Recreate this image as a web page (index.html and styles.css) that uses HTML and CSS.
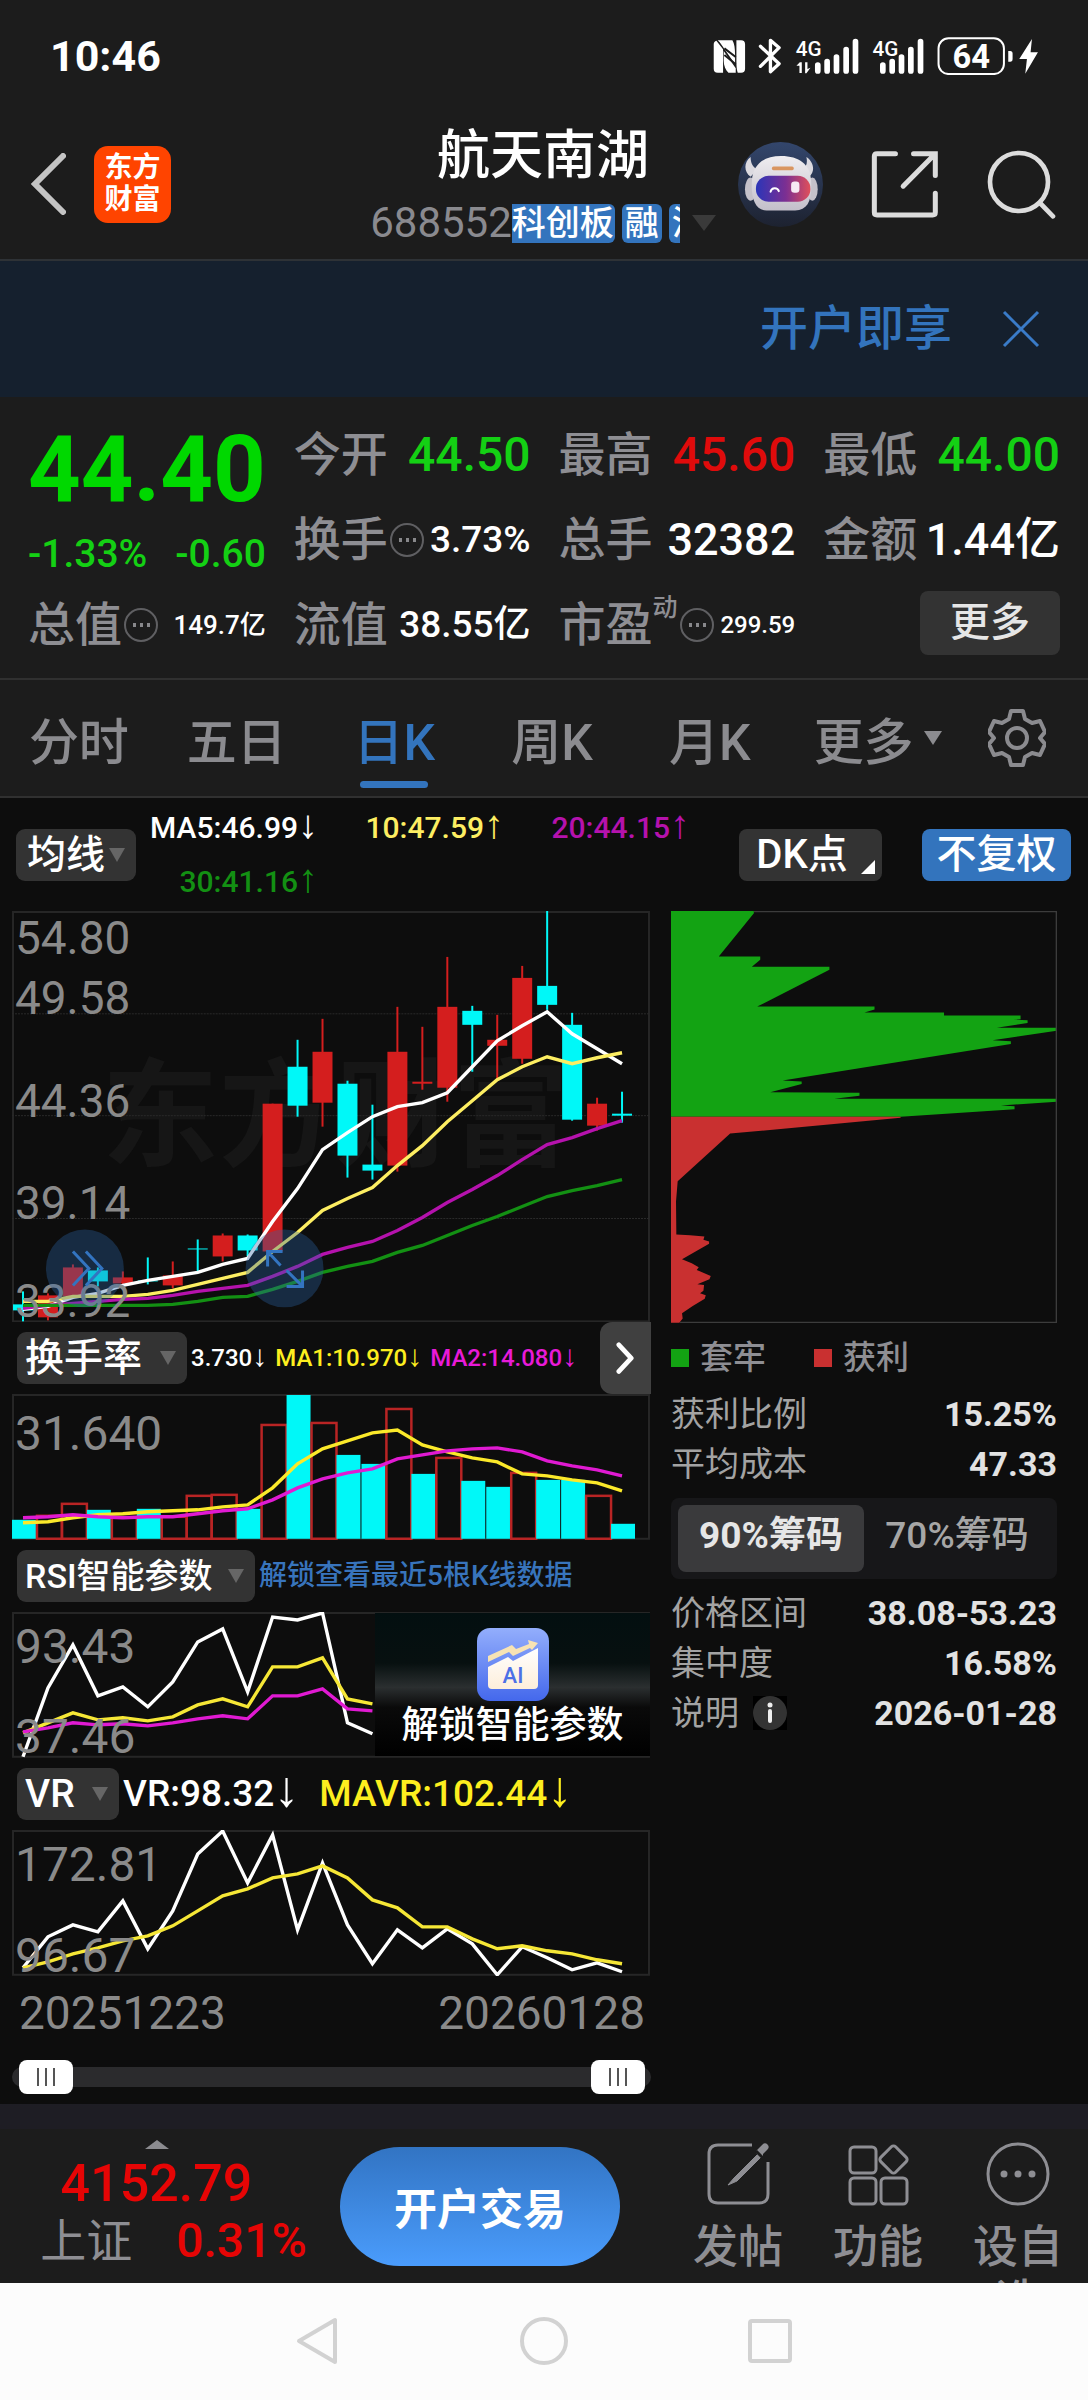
FILE: index.html
```html
<!DOCTYPE html>
<html lang="zh-CN">
<head>
  <meta charset="UTF-8">
  <meta name="viewport" content="width=device-width, initial-scale=1.0">
  <title>航天南湖 688552</title>
  <link rel="stylesheet" href="styles.css">
</head>
<body>
  <div class="status">
    <span class="clock">10:46</span>
    <svg class="status-icons" viewBox="38 50 980 115" fill="#fff">
      <path d="M52 60h44c6 10 8 24 8 44v28L58 66zM40 72c0-6 3-10 8-11l20 26v70H52c-8 0-12-4-12-12zM110 60h12c8 0 12 4 12 12v73c0 8-4 12-12 12h-10c-4-12-4-24-4-44V60zM70 92l36 52v13H84c-8-8-14-20-14-36z"/>
      <path d="M72 84l34 26M72 104l34 28" stroke="#1c1c1c" stroke-width="6"/>
      <path d="M180 78l56 52-26 24V60l26 22-56 56" fill="none" stroke="#fff" stroke-width="10" stroke-linejoin="round" stroke-linecap="round"/>
      <text x="286" y="106" font-size="62">4G</text>
      <path d="M288 136l10-10h6v32h-7v-22zM314 126h7v20l9-4-12 17h-4z"/>
      <path d="M352 134v18M380 124v28M408 110v42M437 88v64M465 64v88" stroke="#fff" stroke-width="17" stroke-linecap="round"/>
      <text x="516" y="106" font-size="62">4G</text>
      <path d="M547 134v18M575 124v28M603 110v42M631 88v64M660 64v88" stroke="#fff" stroke-width="17" stroke-linecap="round"/>
      <rect x="714" y="54" width="196" height="107" rx="30" fill="none" stroke="#fff" stroke-width="6"/>
      <text class="battery" x="812" y="142" font-size="98" text-anchor="middle">64</text>
      <path d="M923 92h6q7 0 7 8v16q0 8-7 8h-6z"/>
      <path d="M994 56l-38 60h23l-5 44 38-64h-22z"/>
    </svg>
  </div>

  <header class="topbar">
    <div class="topbar-left">
      <button class="icon-btn" aria-label="返回">
        <svg class="back" viewBox="0 0 36 62"><path d="M33 3L5 31l28 28" fill="none" stroke="#c4c4c4" stroke-width="6" stroke-linecap="round"/></svg>
      </button>
      <div class="logo">东方<br>财富</div>
    </div>
    <div class="stock">
      <h1>航天南湖</h1>
      <div class="stock-sub">
        <span class="code">688552</span>
        <div class="tags"><span class="tag first">科创板</span><span class="tag">融</span><span class="tag">沪</span></div>
        <span class="caret dark"></span>
      </div>
    </div>
    <div class="topbar-right">
      <button class="icon-btn" aria-label="智能助手">
        <svg class="avatar" viewBox="114 366 256 256">
          <defs>
            <linearGradient id="sky" x1="0" y1="0" x2="0" y2="1"><stop offset="0" stop-color="#33466c"/><stop offset="1" stop-color="#1d2230"/></linearGradient>
            <linearGradient id="visor" x1="0" y1="0" x2="1" y2="0"><stop offset="0" stop-color="#2b35b8"/><stop offset=".55" stop-color="#7c2f92"/><stop offset="1" stop-color="#e0505a"/></linearGradient>
            <linearGradient id="shell" x1="0" y1="0" x2="0" y2="1"><stop offset="0" stop-color="#efedf0"/><stop offset="1" stop-color="#c3bfca"/></linearGradient>
          </defs>
          <circle cx="242" cy="494" r="128" fill="url(#sky)"/>
          <path d="M152 411c-20 14-22 44 0 60l20-22c-14-8-20-20-20-38zM320 411c22 14 28 44 8 60l-20-22c12-8 16-20 12-38z" fill="#dcdae0"/>
          <ellipse cx="152" cy="508" rx="17" ry="35" fill="#c4c1ca"/>
          <ellipse cx="338" cy="508" rx="16" ry="35" fill="#c4c1ca"/>
          <path d="M156 480c4-46 34-72 88-72s88 26 90 72c4 60-8 92-48 92h-86c-34 0-48-36-44-92z" fill="url(#shell)"/>
          <rect x="168" y="468" width="164" height="78" rx="38" fill="url(#visor)"/>
          <rect x="216" y="440" width="66" height="11" rx="5" fill="#d99560"/>
          <path d="M212 516c3-14 21-14 25-2" fill="none" stroke="#fff" stroke-width="6" stroke-linecap="round"/>
          <rect x="274" y="485" width="25" height="34" rx="10" fill="#f6e9f4"/>
        </svg>
      </button>
      <button class="icon-btn" aria-label="分享">
        <svg class="share" viewBox="507 391 203 203" fill="none" stroke="#dcdcdc" stroke-width="15" stroke-linecap="round"><path d="M580 402h-55q-8 0-8 8v167q0 8 8 8h166q8 0 8-8v-57M634 402h65v65M696 405l-93 94"/></svg>
      </button>
      <button class="icon-btn" aria-label="搜索">
        <svg class="search" viewBox="859 387 207 207" fill="none" stroke="#dcdcdc" stroke-width="14" stroke-linecap="round"><circle cx="955" cy="483" r="87"/><path d="M1018 546l39 40"/></svg>
      </button>
    </div>
  </header>

  <div class="banner">
    <a href="#">开户即享</a>
    <button class="icon-btn" aria-label="关闭">
      <svg class="close" viewBox="0 0 38 38"><path d="M2 2l34 34M36 2L2 36" stroke="#3a7bc8" stroke-width="3"/></svg>
    </button>
  </div>

  <section class="quote">
    <div class="price">
      <strong>44.40</strong>
      <div class="change"><span>-1.33%</span><span>-0.60</span></div>
    </div>
    <div class="item"><span class="label">今开</span><span class="num n-xl green">44.50</span></div>
    <div class="item"><span class="label">最高</span><span class="num n-xl red">45.60</span></div>
    <div class="item"><span class="label">最低</span><span class="num n-xl green">44.00</span></div>
    <div class="item"><span class="label">换手<i class="dots"></i></span><span class="num n-m">3.73%</span></div>
    <div class="item"><span class="label">总手</span><span class="num n-l">32382</span></div>
    <div class="item"><span class="label">金额</span><span class="num n-l">1.44亿</span></div>
    <div class="item"><span class="label">总值<i class="dots"></i></span><span class="num n-s">149.7亿</span></div>
    <div class="item"><span class="label">流值</span><span class="num n-m">38.55亿</span></div>
    <div class="item"><span class="label">市盈<sup>动</sup><i class="dots"></i></span><span class="num n-xs">299.59</span></div>
    <div class="item end"><button class="more">更多</button></div>
  </section>

  <nav class="tabs">
    <button>分时</button>
    <button>五日</button>
    <button class="active">日K</button>
    <button>周K</button>
    <button>月K</button>
    <button class="has-caret">更多<span class="caret small"></span></button>
    <button class="gear" aria-label="设置">
      <svg viewBox="0 0 58 58" fill="none" stroke="#8b8b8f" stroke-width="4" stroke-linejoin="round"><path d="M23 2h12l2 8 7 4 8-2 5 11-5 6 5 6-5 11-8-2-7 4-2 8H23l-2-8-7-4-8 2-5-11 5-6-5-6 5-11 8 2 7-4z"/><circle cx="29" cy="29" r="10"/></svg>
    </button>
  </nav>

  <main class="panel">
    <div class="ma-bar">
      <span class="picker tight"><select aria-label="均线"><option>均线</option></select></span>
      <div class="ma-list">
        <span class="white">MA5:46.99<i class="arrow">↓</i></span>
        <span class="yellow">10:47.59<i class="arrow">↑</i></span>
        <span class="purple">20:44.15<i class="arrow">↑</i></span>
        <span class="darkgreen">30:41.16<i class="arrow">↑</i></span>
      </div>
      <button class="chip dk">DK点</button>
      <button class="chip blue">不复权</button>
    </div>

    <div class="columns">
      <div class="charts">
        <svg class="chart" id="kline" viewBox="0 0 640 412"></svg>

        <div class="ind-bar">
          <span class="picker"><select aria-label="指标一"><option>换手率</option></select></span>
          <div class="values small"><span>3.730<i class="arrow">↓</i></span><span class="lemon">MA1:10.970<i class="arrow">↓</i></span><span class="pink">MA2:14.080<i class="arrow">↓</i></span></div>
          <button class="expand" aria-label="展开"><svg viewBox="0 0 20 34"><path d="M3 3l13 14L3 31" fill="none" stroke="#fff" stroke-width="5" stroke-linecap="round" stroke-linejoin="round"/></svg></button>
        </div>
        <svg class="chart sub" id="turnover" viewBox="0 0 640 146"></svg>

        <div class="ind-bar">
          <span class="picker rsi"><select aria-label="指标二"><option>RSI智能参数</option></select></span>
          <a class="unlock-link" href="#">解锁查看最近5根K线数据</a>
        </div>
        <div class="chart-box">
          <svg class="chart sub" id="rsi" viewBox="0 0 640 146"></svg>
          <button class="unlock">
            <svg viewBox="0 0 72 73">
              <defs>
                <linearGradient id="aibg" x1="0" y1="0" x2="0" y2="1"><stop offset="0" stop-color="#93aefc"/><stop offset="1" stop-color="#4468ec"/></linearGradient>
                <linearGradient id="paper" x1="0" y1="0" x2="0" y2="1"><stop offset="0" stop-color="#fff"/><stop offset="1" stop-color="#fdeeda"/></linearGradient>
              </defs>
              <rect width="72" height="73" rx="13" fill="url(#aibg)"/>
              <path d="M11 39l20-10 5 4 25-13v37q0 4-4 4H15q-4 0-4-4z" fill="url(#paper)"/>
              <path d="M11 28l24-11 4 4 13-5-1-4 10 3-6 7-2-2-17 8-4-4-21 10z" fill="#f7e3b4"/>
              <text x="36" y="55" font-size="22" text-anchor="middle" fill="#4d70e6">AI</text>
            </svg>
            <span>解锁智能参数</span>
          </button>
        </div>

        <div class="ind-bar">
          <span class="picker"><select aria-label="指标三"><option>VR</option></select></span>
          <div class="values"><span>VR:98.32<i class="arrow">↓</i></span><span class="lemon">MAVR:102.44<i class="arrow">↓</i></span></div>
        </div>
        <svg class="chart sub" id="vr" viewBox="0 0 640 146"></svg>

        <div class="dates"><span>20251223</span><span>20260128</span></div>
        <div class="range">
          <input type="range" min="0" max="100" value="0" aria-label="开始日期">
          <input type="range" min="0" max="100" value="100" aria-label="结束日期">
        </div>
      </div>

      <aside class="chips">
        <svg class="chart" viewBox="33 36 1155 1233">
          <path fill="#13a313" d="M33 36H281V43L176 172H300V182L275 203H507V212L291 322H642V331L612 340H850V349H1079V360L1057 361 1100 363V371L1008 385H1187V394L995 423 1050 426V434L367 543 424 546V554L330 578 597 580V589L522 598H1187V607L1020 618 1061 620V629L720 652H33z"/>
          <path fill="#c93030" d="M33 652H720V655L210 702 53 845 48 905 49 1004 90 1006 133 1010 130 1020 147 1025V1032L66 1078 95 1090 116 1102 110 1110 152 1128 148 1138 112 1153 132 1155 130 1172 120 1180 137 1186 134 1196 98 1218 66 1240 68 1255 58 1268H33z"/>
          <path fill="none" stroke="#3c3c3c" stroke-width="4" d="M281 38H1186V1267H60"/>
        </svg>
        <div class="legend">
          <span class="key"><i class="sq g"></i>套牢</span>
          <span class="key"><i class="sq r"></i>获利</span>
        </div>
        <dl>
          <div><dt>获利比例</dt><dd>15.25%</dd></div>
          <div><dt>平均成本</dt><dd>47.33</dd></div>
        </dl>
        <div class="segment">
          <button class="on">90%筹码</button>
          <button>70%筹码</button>
        </div>
        <dl>
          <div><dt>价格区间</dt><dd>38.08-53.23</dd></div>
          <div><dt>集中度</dt><dd>16.58%</dd></div>
          <div><dt>说明<svg class="info" viewBox="0 0 34 34"><path d="M0 0h34v34H0z"/><circle cx="17" cy="17" r="17" fill="#333"/><path d="M17 15v10" stroke="#eee" stroke-width="4" stroke-linecap="round"/><circle cx="17" cy="9" r="2.5" fill="#eee"/></svg></dt><dd>2026-01-28</dd></div>
        </dl>
      </aside>
    </div>
  </main>

  <footer class="toolbar">
    <div class="index">
      <i class="up"></i>
      <span class="index-num">4152.79</span>
      <div class="index-row"><span class="index-name">上证</span><span class="index-pct">0.31%</span></div>
    </div>
    <button class="cta">开户交易</button>
    <button class="tool">
      <svg viewBox="0 0 64 64" fill="none" stroke="#8e8e93" stroke-width="3"><path d="M46 3H12q-9 0-9 9v40q0 9 9 9h41q9 0 9-9V20"/><path d="M54 10L28 36l-6 7 9-4 26-26z" fill="#8e8e93" stroke-width="1"/><path d="M54 10l5-5" stroke-width="7" stroke-linecap="round"/><path d="M50 9l8 8" stroke="#1c1c1c" stroke-width="3"/></svg>
      <span>发帖</span>
    </button>
    <button class="tool">
      <svg viewBox="0 0 64 64" fill="none" stroke="#8e8e93" stroke-width="3"><rect x="4" y="5" width="26" height="26" rx="4"/><rect x="4" y="36" width="26" height="26" rx="4"/><rect x="35" y="36" width="26" height="26" rx="4"/><rect x="37" y="7" width="21" height="21" rx="3" transform="rotate(45 47.5 17.5)"/></svg>
      <span>功能</span>
    </button>
    <button class="tool">
      <svg viewBox="0 0 64 64"><circle cx="32" cy="32" r="30" fill="none" stroke="#8e8e93" stroke-width="3"/><g fill="#8e8e93"><circle cx="18" cy="32" r="3.5"/><circle cx="32" cy="32" r="3.5"/><circle cx="46" cy="32" r="3.5"/></g></svg>
      <span>设自选</span>
    </button>
  </footer>

  <div class="sysnav">
    <button class="icon-btn" aria-label="返回"><svg viewBox="0 0 48 48"><path d="M41 3v42L5 24z"/></svg></button>
    <button class="icon-btn" aria-label="主页"><svg viewBox="0 0 48 48"><circle cx="24" cy="24" r="22"/></svg></button>
    <button class="icon-btn" aria-label="最近任务"><svg viewBox="0 0 48 48"><rect x="4" y="4" width="40" height="40" rx="2"/></svg></button>
  </div>
  <script src="charts.js"></script>
</body>
</html>
```
FILE: styles.css
```css
* {margin:0; padding:0; box-sizing:border-box;}
body {background:#1c1c1c; color:#fff; font-family:Roboto, "Liberation Sans", "Noto Sans CJK SC", sans-serif; font-weight:500;}
button, select, input {font:inherit; color:inherit; background:none; border:0; cursor:pointer;}
a {text-decoration:none;}
i {font-style:normal;}
svg {display:block;}
svg text {font-family:Roboto, "Liberation Sans", "Noto Sans CJK SC", sans-serif;}
.icon-btn {display:flex;}

.green {color:#14d014;}
.red {color:#e00b0b;}
.yellow {color:#fdee62;}
.purple {color:#b512ad;}
.darkgreen {color:#139013;}
.lemon {color:#fdee1f;}
.pink {color:#e81ad8;}

.caret {width:0; height:0; border:12px solid transparent; border-top:16px solid #666; border-bottom:0;}
.caret.dark {border-top-color:#3a3a3a;}
.caret.small {border-width:14px 9px 0; border-top-color:#8b8b8f;}
.arrow {font-size:40px; line-height:30px;}

/* status bar */
.status {display:flex; justify-content:space-between; align-items:center; height:112px; padding:0 48px 0 50px;}
.clock {font-size:43px; line-height:44px; font-weight:700;}
.status-icons {width:327px;}
.battery {font-weight:700;}

/* top bar */
.topbar {display:grid; grid-template-columns:1fr auto 1fr; height:149px; padding:10px 32px 0 30px; border-bottom:2px solid #2e3236;}
.topbar-left {display:flex; align-items:center; gap:28px; height:124px;}
.back {width:36px;}
.logo {display:flex; align-items:center; justify-content:center; width:77px; height:77px; border-radius:14px; background:#ff4400; font-size:28px; line-height:32px; font-weight:700;}
.stock {display:flex; flex-direction:column; align-items:center;}
.stock h1 {font-size:53px; line-height:68px; font-weight:500;}
.stock-sub {display:flex; align-items:center; height:66px;}
.code {font-size:42px; line-height:42px; color:#8a8a8f; font-weight:400;}
.tags {display:flex; gap:7px; width:168px; overflow:hidden;}
.tag {flex:none; padding:0 3px; border-radius:6px; background:#3374bd; font-size:34px; line-height:39px;}
.tag.first {padding:0 1px 0 0; border-radius:0 6px 6px 0;}
.stock-sub .caret {margin-left:12px;}
.topbar-right {display:flex; align-items:center; justify-content:flex-end; gap:48px; height:124px;}
.avatar {width:85px;}
.share {width:68px;}
.search {width:69px;}

.banner {display:flex; align-items:center; justify-content:flex-end; gap:50px; height:136px; padding-right:48px; background:#15202e;}
.banner a {font-size:48px; line-height:56px; color:#3374bd;}
.close {width:38px;}

/* quote */
.quote {display:grid; grid-template-columns:repeat(4, 1fr); grid-auto-rows:85px; column-gap:28px; padding:15px 28px 11px; border-bottom:2px solid #303030;}
.price {grid-row:span 2; color:#00d800;}
.price strong {display:block; padding-top:12px; font-size:92px; line-height:92px; font-weight:700;}
.change {display:flex; justify-content:space-between; padding-top:16px; font-size:39px; line-height:44px; color:#14d014;}
.item {display:flex; align-items:center; justify-content:space-between; white-space:nowrap;}
.item.end {justify-content:flex-end;}
.label {display:flex; align-items:center; font-size:47px; line-height:60px; color:#8e8e93;}
.label sup {align-self:flex-start; font-size:25px; line-height:25px;}
.num {line-height:50px;}
.n-xl {font-size:48px;}
.n-l {font-size:45px;}
.n-m {font-size:37px;}
.n-s {font-size:26px;}
.n-xs {font-size:24px;}
.dots {display:flex; align-items:center; justify-content:center; width:34px; height:34px; margin-left:2px; border:2px solid #5f5f62; border-radius:50%;}
.dots:before {content:''; width:20px; height:4px; background:radial-gradient(circle, #88888b 2px, transparent 2px) 0 0 / 7px 4px;}
.more {width:140px; height:64px; margin-bottom:4px; border-radius:8px; background:#333; font-size:40px; line-height:60px; color:#e6e6e6;}

/* period tabs */
.tabs {display:flex; height:118px; border-bottom:2px solid #303030;}
.tabs button {position:relative; flex:0 0 14.5%; display:flex; align-items:center; justify-content:center; font-size:50px; color:#8b8b8f;}
.tabs .gear {flex:1;}
.gear svg {width:58px;}
.tabs .active {color:#3374bd;}
.tabs .active:after {content:''; position:absolute; bottom:8px; width:68px; height:7px; border-radius:4px; background:#3374bd;}
.tabs .has-caret {gap:10px; padding-left:20px;}

/* chart panel */
.panel {background:#0d0d0d;}
.ma-bar {display:flex; align-items:center; height:113px; padding:0 17px 0 16px;}
.picker {position:relative; display:flex; border-radius:9px; background:#333;}
.picker select {appearance:none; height:52px; padding:0 44px 0 8px; font-size:39px; line-height:52px;}
.picker.tight select {padding:0 30px 0 11px;}
.picker.rsi select {padding-right:42px; font-size:34px;}
.picker:after {content:''; position:absolute; right:11px; top:19px; border:8px solid transparent; border-top:14px solid #666; border-bottom:0; pointer-events:none;}
.ma-list {flex:none; display:grid; grid-template-columns:repeat(3, 186px); margin-right:auto; margin-left:-4px; font-size:30px; line-height:54px; text-align:right;}
.chip {position:relative; width:143px; height:52px; border-radius:8px; background:#333; font-size:40px; line-height:50px;}
.chip.dk {padding-right:17px;}
.chip.dk:after {content:''; position:absolute; right:7px; bottom:7px; border:7px solid #fff; border-top-color:transparent; border-left-color:transparent;}
.chip.blue {width:149px; margin-left:40px; background:#3374bd;}

.columns {display:flex; gap:20px; padding:0 31px 0 12px;}
.charts {flex:639;}
.chips {flex:386;}
.chart {width:100%;}
.charts .chart {font-size:46px;}
.charts .sub {font-size:48px;}
.ind-bar {display:flex; align-items:center; height:72px; padding-left:5px;}
.values {display:flex; gap:20px; padding-left:4px; font-size:37px; line-height:48px; white-space:nowrap;}
.values .arrow {font-size:50px;}
.values.small {gap:8px; font-size:24px;}
.values.small .arrow {font-size:30px;}
.expand {display:flex; align-items:center; justify-content:center; align-self:stretch; width:51px; margin-left:auto; border-radius:12px 0 0 12px; background:#404040;}
.expand svg {width:19px;}
.unlock-link {padding-left:4px; font-size:28px; line-height:48px; color:#3874bc; white-space:nowrap;}
.chart-box {position:relative;}
.unlock {position:absolute; top:1px; right:1px; bottom:2px; width:43%; display:flex; flex-direction:column; align-items:center; justify-content:center; gap:3px; padding-top:7px; background:linear-gradient(#030f10 0%, #071010 35%, #2b2f30 52%, #0a0a0a 66%, #000 100%); font-size:37px; line-height:44px;}
.unlock svg {width:72px;}
.dates {display:flex; justify-content:space-between; padding:0 6px 0 7px; font-size:46px; line-height:75px; color:#8a8a8a; font-weight:400;}
.range {position:relative; height:53px;}
.range:before {content:''; position:absolute; left:0; right:0; top:16px; height:20px; border-radius:10px; background:#2b2b2d;}
.range input {appearance:none; position:absolute; left:7px; top:9px; width:calc(100% - 13px); height:34px; pointer-events:none;}
.range input::-webkit-slider-thumb {appearance:none; width:54px; height:34px; border-radius:8px; background:linear-gradient(90deg, #555 2px, transparent 2px) 18px 8px / 8px 18px no-repeat, linear-gradient(90deg, #555 2px, transparent 2px) 26px 8px / 8px 18px no-repeat, linear-gradient(90deg, #555 2px, transparent 2px) 34px 8px / 8px 18px no-repeat, #fff; pointer-events:auto;}

.legend {display:flex; gap:48px; padding:10px 0 6px; font-size:33px; line-height:50px; color:#8e8e93;}
.key {display:flex; align-items:center; gap:11px;}
.sq {width:18px; height:18px;}
.sq.g {background:#13a313;}
.sq.r {background:#c93030;}
.chips dl div {display:flex; justify-content:space-between; font-size:34px; line-height:50px; white-space:nowrap;}
.chips dt {display:flex; align-items:center; gap:14px; color:#a3a3a3; font-weight:400;}
.chips dd {color:#e2e2e2; font-weight:700;}
.info {width:34px;}
.segment {display:flex; margin:9px 0; padding:7px; border-radius:8px; background:#171719;}
.segment button {flex:1; height:67px; border-radius:8px; font-size:37px; line-height:62px; padding-bottom:5px; color:#a6a6a6; white-space:nowrap;}
.segment .on {background:#3a3a3c; color:#e6e6e6; font-weight:700;}

/* bottom toolbar */
.toolbar {display:flex; height:179px; border-top:25px solid #1e1d24; overflow:hidden;}
.index {flex:1; display:flex; flex-direction:column; align-items:center; padding:11px 27px 0 0;}
.up {border:12px solid transparent; border-bottom:9px solid #8b8b8f; border-top:0;}
.index-num {padding-top:8px; font-size:52px; line-height:54px; color:#e60505;}
.index-row {display:flex; align-items:center; gap:44px; padding-left:34px; white-space:nowrap;}
.index-name {font-size:46px; line-height:60px; color:#8e8e93; font-weight:400;}
.index-pct {font-size:48px; line-height:60px; color:#e60505;}
.cta {width:280px; height:119px; margin:18px 48px 0 0; border-radius:60px; background:linear-gradient(#3274c3, #4a9cfc); font-size:43px; font-weight:700;}
.tool {flex:none; display:flex; flex-direction:column; align-items:center; justify-content:flex-start; width:140px; padding-top:13px; color:#8e8e93;}
.tool svg {flex:none; width:64px; height:64px;}
.tool span {width:92px; padding-top:15px; font-size:45px; line-height:54px;}

.sysnav {display:flex; align-items:center; justify-content:center; gap:178px; height:117px; background:#fcfcfc;}
.sysnav svg {width:48px; fill:none; stroke:#d2d2d2; stroke-width:4; stroke-linejoin:round;}
```
FILE: charts.js
```js
const STEP = 25;
const RED = "#d41e1e";
const CYAN = "#00f8f8";

// [up?, high, top, bottom, low]
const candles = [
  [0, 381, 394, 400, 411], [1, 383, 385, 407, 410], [1, 354, 357, 386, 386],
  [0, 357, 360, 371, 376], [1, 361, 367, 373, 375], [0, 347, 370, 371, 374],
  [1, 351, 365, 375, 378], [0, 329, 338, 339, 361], [1, 323, 325, 346, 351],
  [0, 324, 325, 340, 346], [1, 193, 193, 341, 341], [0, 129, 156, 195, 206],
  [1, 108, 141, 192, 216], [0, 170, 173, 245, 267], [0, 194, 254, 260, 269],
  [1, 96, 141, 255, 261], [1, 116, 171, 173, 179], [1, 46, 96, 177, 191],
  [0, 95, 100, 114, 161], [1, 104, 129, 135, 168], [1, 55, 67, 148, 153],
  [0, 0, 75, 94, 99], [0, 102, 114, 209, 210], [1, 187, 193, 215, 220],
  [0, 181, 203, 205, 212]
];
const ma5 = [399,396,387,383,375,370,366,362,354,348,311,278,239,222,206,196,192,182,156,130,115,101,123,138,153];
const ma10 = [391,391,386,386,386,384,380,374,368,362,341,322,300,288,277,255,235,211,190,169,156,146,153,147,142];
const ma20 = [398,395,393,391,389,388,385,381,378,375,366,356,344,337,331,320,307,292,279,265,249,234,227,218,210];
const ma30 = [395,395,395,395,395,395,394,391,387,386,379,371,362,356,351,342,335,325,315,306,296,286,280,275,269];

const bars = [126,122,110,116,124,115,123,102,101,115,31,1,29,61,70,15,80,64,87,93,79,86,86,102,130];
const barUp = [0,1,1,0,1,0,1,1,1,0,1,0,1,0,0,1,0,1,0,0,1,0,0,1,0];
const turnMa1 = [129,128,124,121,120,118,117,116,113,111,94,70,55,47,39,36,51,58,64,68,80,82,86,89,97];
const turnMa2 = [124,123,121,123,124,123,123,120,117,115,106,94,85,79,75,65,61,57,55,54,58,67,72,76,82];

const rsi1 = [145,76,33,84,75,95,70,30,17,80,5,8,1,111,122];
const rsi2 = [121,111,101,108,106,109,105,93,87,95,55,55,46,87,92];
const rsi3 = [120,116,111,113,112,114,111,107,104,107,84,84,77,97,99];

const vr = [138,107,95,102,71,119,81,24,1,53,5,100,33,95,134,100,118,99,114,145,117,128,140,133,142];
const mavr = [138,132,124,118,111,106,96,81,66,59,48,44,36,48,70,78,97,97,109,119,116,121,124,130,134];

function line(data, color) {
  const points = data.map((y, i) => (11 + i * STEP) + "," + y).join(" ");
  return `<polyline points="${points}" fill="none" stroke="${color}" stroke-width="3.4"/>`;
}

function frame(height) {
  return `<rect x="1" y="1" width="637" height="${height - 2}" fill="none" stroke="#262626" stroke-width="2"/>`;
}

function label(text, y) {
  return `<text x="3" y="${y}" fill="#8a8a8a" font-weight="400">${text}</text>`;
}

function candle(c, i) {
  const x = 11 + i * STEP;
  const color = c[0] ? RED : CYAN;
  return `<path d="M${x} ${c[1]}V${c[4]}" stroke="${color}" stroke-width="2"/>` +
    `<rect x="${x - 10}" y="${c[2]}" width="20" height="${c[3] - c[2]}" fill="${color}"/>`;
}

function bar(y, i) {
  const x = i * STEP;
  if (barUp[i]) {
    return `<rect x="${x}" y="${y}" width="25" height="${145 - y}" fill="none" stroke="#b92424" stroke-width="2.5"/>`;
  }
  return `<rect x="${x}" y="${y}" width="24" height="${145 - y}" fill="${CYAN}"/>`;
}

document.querySelector("#kline").innerHTML =
  `<text x="90" y="246" font-size="117" font-weight="700" fill="#161616">东方财富</text>` +
  frame(412) +
  `<path d="M0 103H639M0 205H639M0 308H639" stroke="#2a2a2a" stroke-dasharray="2 1"/>` +
  candles.map(candle).join("") +
  line(ma5, "#fff") + line(ma10, "#fdee62") + line(ma20, "#b512ad") + line(ma30, "#139013") +
  label("54.80", 43) + label("49.58", 103) + label("44.36", 206) + label("39.14", 308) + label("33.92", 407) +
  `<g fill="#2c64a5" fill-opacity=".35"><circle cx="73" cy="358" r="39"/><circle cx="273" cy="358" r="39"/></g>` +
  `<path d="M61 341l16 17-16 17M74 341l16 17-16 17M256 356v-15h15M256 341l13 14M275 376h16v-16M275 360l16 16" fill="none" stroke="#3374c0" stroke-width="3"/>`;

document.querySelector("#turnover").innerHTML =
  frame(146) + bars.map(bar).join("") +
  line(turnMa1, "#fbe92a") + line(turnMa2, "#e01ad2") + label("31.640", 56);

document.querySelector("#rsi").innerHTML =
  frame(146) + line(rsi1, "#fff") + line(rsi2, "#f6e736") + line(rsi3, "#e01ad2") +
  label("93.43", 51) + label("37.46", 141);

document.querySelector("#vr").innerHTML =
  frame(146) + line(vr, "#fff") + line(mavr, "#f6e736") +
  label("172.81", 51) + label("96.67", 142);
```
